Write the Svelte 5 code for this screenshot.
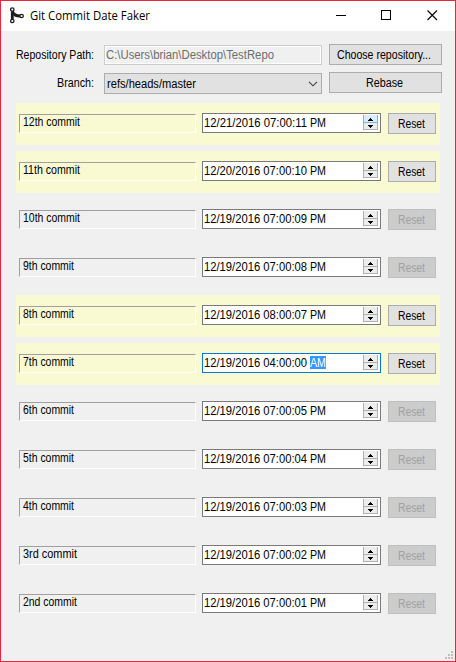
<script>
  const rows = [
    { name: '12th commit', time: '12/21/2016 07:00:11', half: 'PM', changed: true, hot: true },
    { name: '11th commit', time: '12/20/2016 07:00:10', half: 'PM', changed: true },
    { name: '10th commit', time: '12/19/2016 07:00:09', half: 'PM' },
    { name: '9th commit', time: '12/19/2016 07:00:08', half: 'PM' },
    { name: '8th commit', time: '12/19/2016 08:00:07', half: 'PM', changed: true },
    { name: '7th commit', time: '12/19/2016 04:00:00', half: 'AM', changed: true, focused: true },
    { name: '6th commit', time: '12/19/2016 07:00:05', half: 'PM' },
    { name: '5th commit', time: '12/19/2016 07:00:04', half: 'PM' },
    { name: '4th commit', time: '12/19/2016 07:00:03', half: 'PM' },
    { name: '3rd commit', time: '12/19/2016 07:00:02', half: 'PM' },
    { name: '2nd commit', time: '12/19/2016 07:00:01', half: 'PM' }
  ];

  // Condenses the text horizontally so that it fills the given width in pixels.
  function fit(node, width) {
    node.style.display = 'inline-block';
    const natural = node.getBoundingClientRect().width;
    node.style.transformOrigin = '0 0';
    node.style.transform = `scaleX(${width / natural})`;
    node.style.marginRight = `${width - natural}px`;
  }
</script>

<div class="window">
  <header>
    <svg class="logo" width="16" height="17" viewBox="0 0 16 17" fill="none" stroke="#1c1c1c">
      <path d="M3.3 4.5V12" stroke-width="2.8" />
      <path d="M3.5 4.5C4.5 8 7 9 11 9" stroke-width="2.8" />
      <circle cx="3.3" cy="2.5" r="1.7" fill="#fff" stroke-width="1.3" />
      <circle cx="3.3" cy="14" r="1.7" fill="#fff" stroke-width="1.3" />
      <circle cx="12.6" cy="9" r="1.7" fill="#fff" stroke-width="1.3" />
    </svg>
    <h1><span use:fit={120}>Git Commit Date Faker</span></h1>
    <svg class="controls" width="104" height="11" viewBox="0 0 104 11" fill="none" stroke="#000" shape-rendering="crispEdges">
      <path d="M0 5.5H10" />
      <rect x="45.5" y="0.5" width="9" height="9" />
      <path d="M91.5 0.5L101 10M101 0.5L91.5 10" shape-rendering="auto" stroke-width="1.1" />
    </svg>
  </header>

  <main>
    <section class="top">
      <div class="line">
        <label for="path"><span use:fit={78}>Repository Path:</span></label>
        <div class="path" id="path"><span use:fit={168}>C:\Users\brian\Desktop\TestRepo</span></div>
        <button class="wide"><span use:fit={94}>Choose repository...</span></button>
      </div>
      <div class="line">
        <label for="branch"><span use:fit={37}>Branch:</span></label>
        <div class="combo" id="branch">
          <span use:fit={89}>refs/heads/master</span>
          <svg width="10" height="6" viewBox="0 0 10 6" fill="none" stroke="#404040" stroke-width="1.1"><path d="M1 0.8L5 4.8L9 0.8" /></svg>
        </div>
        <button class="wide"><span use:fit={37}>Rebase</span></button>
      </div>
    </section>

    <section class="list">
      {#each rows as row}
        <div class="row" class:changed={row.changed}>
          <div class="name"><span use:fit={row.name.length === 11 ? 57 : row.name[0] < '4' ? 54 : 51}>{row.name}</span></div>
          <div class="date" class:focused={row.focused}>
            <span class="time" use:fit={103}>{row.time}</span>
            <span class="half" class:selected={row.focused}><span use:fit={16}>{row.half}</span></span>
            <svg class="spin" class:hot={row.hot} width="15" height="16" viewBox="0 0 15 16" shape-rendering="crispEdges">
              <path class="face" d="M0 0H15V8H0Z" />
              <path class="shade" d="M0 0H1V8H0ZM14 0H15V8H14ZM0 7H15V8H0Z" />
              <path class="lower" d="M0 8H15V15H0Z" />
              <path class="edge" d="M0 8H1V15H0ZM14 8H15V15H14ZM0 14H15V15H0Z" />
              <path d="M7 3H8V4H9V5H10V6H5V5H6V4H7ZM5 10H10V11H9V12H8V13H7V12H6V11H5Z" />
            </svg>
          </div>
          <button class="reset" disabled={!row.changed}><span use:fit={27}>Reset</span></button>
        </div>
      {/each}
    </section>
  </main>

  <svg class="grip" width="8" height="8" viewBox="0 0 8 8" fill="#bfbfbf" shape-rendering="crispEdges">
    <path d="M6 0h2v2h-2zM3 3h2v2h-2zM6 3h2v2h-2zM0 6h2v2h-2zM3 6h2v2h-2zM6 6h2v2h-2z" />
  </svg>
</div>

<style>
  .window {
    position: relative;
    box-sizing: border-box;
    width: 456px;
    height: 662px;
    border: 1px solid #e8273b;
    background: #f0f0f0;
    color: #000;
    font: 12px/14px 'Liberation Sans', Arial, sans-serif;
  }
  .window * { box-sizing: border-box; }
  span { white-space: pre; }
  header {
    display: flex;
    height: 30px;
    padding-left: 8px;
    background: #fff;
  }
  .logo { margin-top: 6px; }
  h1 {
    flex: 1;
    margin: 6px 0 0 5px;
    font: 12px/17px 'Open Sans', 'Noto Sans', sans-serif;
  }
  .controls { margin: 9px 15px 0 0; }
  main { padding: 13px 13px 0 15px; }
  .top {
    display: flex;
    flex-direction: column;
    gap: 7px;
    height: 59px;
  }
  .line {
    display: flex;
    height: 21px;
  }
  label {
    width: 78px;
    margin: 4px 10px 0 0;
    text-align: right;
    white-space: nowrap;
  }
  .path {
    width: 218px;
    height: 20px;
    margin-top: 1px;
    padding: 2px 0 0 1px;
    border: 1px solid #ccc;
    box-shadow: inset 0 0 0 1px #fff;
    color: #6d6d6d;
  }
  .combo {
    display: flex;
    justify-content: space-between;
    width: 218px;
    height: 21px;
    margin-top: 1px;
    padding: 3px 3px 0 2px;
    border: 1px solid #adadad;
    background: #e1e1e1;
  }
  .combo svg { margin: 4px 0 0 0; }
  button {
    flex: none;
    height: 21px;
    padding: 1px 0 0;
    border: 1px solid #adadad;
    border-radius: 0;
    background: #e1e1e1;
    color: #000;
    font: inherit;
    text-align: center;
    white-space: nowrap;
  }
  .wide {
    width: 113px;
    margin-left: 7px;
    padding-right: 3px;
  }
  .list {
    display: flex;
    flex-direction: column;
    gap: 6px;
    width: 424px;
  }
  .row {
    display: flex;
    height: 42px;
    padding: 10px 4px 0 3px;
  }
  .changed { background: #f9f9d2; }
  .name {
    width: 177px;
    height: 19px;
    margin: 1px 6px 0 0;
    padding-left: 3px;
    border: 1px solid;
    border-color: #a0a0a0 #fff #fff #a0a0a0;
  }
  .date {
    display: flex;
    width: 179px;
    height: 20px;
    padding: 2px 2px 0 1px;
    border: 1px solid #7a7a7a;
    background: #fff;
  }
  .focused { border-color: #0078d7; }
  .half {
    height: 13px;
    margin-left: 3px;
    line-height: 14px;
  }
  .selected {
    background: #3399ff;
    color: #fff;
  }
  .spin { margin: -1px 0 0 auto; }
  .face, .lower { fill: #ececec; }
  .shade, .edge { fill: #b0b0b0; }
  .hot .face { fill: #d8ecfa; }
  .hot .shade { fill: #7ab5e2; }
  .reset {
    width: 48px;
    margin-left: 7px;
    padding-right: 2px;
  }
  .reset:disabled {
    border-color: #bfbfbf;
    background: #ccc;
    color: #a0a0a0;
  }
  .grip {
    position: absolute;
    right: 2px;
    bottom: 2px;
  }
</style>
